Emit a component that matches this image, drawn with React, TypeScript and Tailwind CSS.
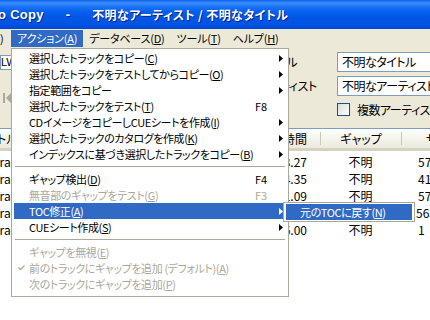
import React from 'react';

const jp = "font-['Noto_Sans_CJK_JP',sans-serif] [font-feature-settings:'palt']";
const ui = 'text-[11px] tracking-[-0.4px]';

type Entry =
  | { sep: true }
  | {
      sep?: false;
      t: string;
      k?: string;
      shortcut?: string;
      sub?: boolean;
      disabled?: boolean;
      active?: boolean;
      checked?: boolean;
    };

const entries: Entry[] = [
  { t: '選択したトラックをコピー', k: 'C', sub: true },
  { t: '選択したトラックをテストしてからコピー', k: 'O', sub: true },
  { t: '指定範囲をコピー', sub: true },
  { t: '選択したトラックをテスト', k: 'T', shortcut: 'F8' },
  { t: 'CDイメージをコピーしCUEシートを作成', k: 'I', sub: true },
  { t: '選択したトラックのカタログを作成', k: 'K', sub: true },
  { t: 'インデックスに基づき選択したトラックをコピー', k: 'B', sub: true },
  { sep: true },
  { t: 'ギャップ検出', k: 'D', shortcut: 'F4' },
  { t: '無音部のギャップをテスト', k: 'G', shortcut: 'F3', disabled: true },
  { t: 'TOC修正', k: 'A', sub: true, active: true },
  { t: 'CUEシート作成', k: 'S', sub: true },
  { sep: true },
  { t: 'ギャップを無視', k: 'E', disabled: true },
  { t: '前のトラックにギャップを追加 (デフォルト)', k: 'A', disabled: true, checked: true },
  { t: '次のトラックにギャップを追加', k: 'P', disabled: true },
];

const rows = [
  { time: '3:23.27', gap: '不明', size: '57.13' },
  { time: '4:04.35', gap: '不明', size: '41.08' },
  { time: '5:41.09', gap: '不明', size: '57.62' },
  { time: '4:50.12', gap: '不明', size: '563' },
  { time: '3:56.00', gap: '不明', size: '1' },
];

function Label({ t, k }: { t: string; k?: string }) {
  if (!k) return <>{t}</>;
  return (
    <>
      {t}(<span className="underline underline-offset-[1px]">{k}</span>)
    </>
  );
}

function Arrow({ white }: { white?: boolean }) {
  return (
    <svg width="4" height="7" viewBox="0 0 4 7" className="shrink-0">
      <path d="M0 0 L4 3.5 L0 7 Z" fill={white ? '#ffffff' : '#000000'} />
    </svg>
  );
}

function ActionMenu() {
  return (
    <div className={`absolute left-[11px] top-[48px] w-[278px] bg-white border border-[#aca899] pt-[1px] pb-[4px] px-[2px] ${ui} ${jp}`}>
      {entries.map((e, i) => {
        if (e.sep) {
          return (
            <div key={i} className="h-[9px] flex items-center px-[1px]">
              <div className="h-px w-full bg-[#aca899]" />
            </div>
          );
        }
        const color = e.active ? 'bg-[#316ac5] text-white' : e.disabled ? 'text-[#aca899]' : 'text-black';
        return (
          <div key={i} className={`h-[16px] flex items-center leading-none ${color}`}>
            <div className="w-[15px] shrink-0 flex justify-center">
              {e.checked && (
                <svg width="7" height="6" viewBox="0 0 7 6">
                  <path d="M0.5 2.5 L2.5 4.5 L6.5 0.5" stroke="#aca899" strokeWidth="1.3" fill="none" />
                </svg>
              )}
            </div>
            <span className="whitespace-nowrap">
              <Label t={e.t} k={e.k} />
            </span>
            <div className="flex-1" />
            {e.shortcut && <span className="w-[24px] shrink-0 whitespace-nowrap tracking-normal">{e.shortcut}</span>}
            <div className="w-[4px] mr-[3px] shrink-0 flex">{e.sub && <Arrow white={e.active} />}</div>
          </div>
        );
      })}
    </div>
  );
}

function TocSubMenu() {
  return (
    <div className={`absolute left-[283px] top-[202px] w-[132px] bg-white border border-[#aca899] p-px pl-[2px] pr-[2px] ${ui} ${jp}`}>
      <div className="h-[16px] flex items-center bg-[#316ac5] text-white pl-[14px] leading-none whitespace-nowrap">
        <Label t="元のTOCに戻す" k="N" />
      </div>
    </div>
  );
}

export default function App() {
  return (
    <div className={`relative w-[430px] h-[320px] overflow-hidden bg-[#ece9d8] text-black ${jp}`}>
      {/* title bar */}
      <div className="h-[29px] flex items-center whitespace-nowrap text-white font-bold bg-[linear-gradient(to_bottom,#0a5fee_0%,#3d8ffc_10%,#1c75f8_22%,#0660ee_40%,#0056e5_60%,#0054e3_85%,#0046d6_100%)] [text-shadow:1px_1px_0_#0a1e8a]">
        <span className="ml-[-2px] font-['Liberation_Sans',sans-serif] text-[13px] tracking-[0.3px]">o Copy</span>
        <span className="ml-[22px] font-['Liberation_Sans',sans-serif] text-[13px]">-</span>
        <span className="ml-[22px] text-[12px] tracking-[0.4px]">不明なアーティスト / 不明なタイトル</span>
      </div>

      {/* menu bar */}
      <div className="h-[19px] flex items-start leading-none whitespace-nowrap text-[11px] tracking-[-0.2px]">
        <div className="w-[11px] h-[17px] mt-px flex items-center">)</div>
        <div className="h-[17px] mt-px px-[6px] flex items-center bg-[#316ac5] text-white">
          <Label t="アクション" k="A" />
        </div>
        <div className="h-[17px] mt-px px-[6px] flex items-center">
          <Label t="データベース" k="D" />
        </div>
        <div className="h-[17px] mt-px px-[6px] flex items-center">
          <Label t="ツール" k="T" />
        </div>
        <div className="h-[17px] mt-px px-[6px] flex items-center">
          <Label t="ヘルプ" k="H" />
        </div>
      </div>

      {/* toolbar + album fields */}
      <div className={`h-[80px] flex leading-none ${ui}`}>
        <div className="w-[11px] shrink-0 flex flex-col">
          <div className="mt-[7px] h-[15px] w-[30px] bg-white border border-[#7f9db9] flex items-center overflow-hidden">
            <span className="font-['Liberation_Sans',sans-serif] text-[11px] tracking-normal">LW</span>
          </div>
          <svg width="9" height="12" viewBox="0 0 9 12" className="mt-[22px] ml-[3px]">
            <rect x="0" y="1" width="2" height="10" fill="#aca899" />
            <path d="M8 1 L3 6 L8 11 Z" fill="#aca899" />
          </svg>
        </div>
        <div className="ml-[246px] shrink-0 flex flex-col pt-[4px] gap-[4px] whitespace-nowrap">
          <div className="h-[20px] flex items-center">
            <span className="w-[80px] shrink-0 text-[12px] tracking-[-0.3px]">タイトル</span>
            <div className="h-[20px] w-[120px] shrink-0 bg-white border border-[#7f9db9] flex items-center pl-[4px] text-[12px] tracking-[-0.5px]">不明なタイトル</div>
          </div>
          <div className="h-[20px] flex items-center">
            <span className="w-[80px] shrink-0 text-[12px] tracking-[-0.3px]">アーティスト</span>
            <div className="h-[20px] w-[120px] shrink-0 bg-white border border-[#7f9db9] flex items-center pl-[4px] text-[12px] tracking-[-0.5px]">不明なアーティスト</div>
          </div>
          <div className="mt-[3px] h-[13px] flex items-center ml-[80px]">
            <div className="w-[13px] h-[13px] shrink-0 border border-[#1c5180] bg-[linear-gradient(135deg,#dcdcd7,#ffffff)]" />
            <span className="ml-[7px] text-[12px] tracking-[-0.5px]">複数アーティスト</span>
          </div>
        </div>
      </div>

      {/* track list */}
      <div className="bg-white border-t border-[#7f9db9] h-[200px] leading-none whitespace-nowrap text-[12px]">
        <div className="h-[22px] flex bg-[linear-gradient(to_bottom,#ffffff,#f3f2ea_60%,#ebeadb)] border-b-[3px] border-[#d6d2c2]">
          <div className="w-[240px] shrink-0 flex items-center">
            <span className="ml-[-3px]">トル</span>
          </div>
          <div className="w-[80px] shrink-0 flex items-center justify-end pr-[13px]">時間</div>
          <div className="w-[81px] shrink-0 flex items-center justify-center border-l border-[#cbc7b8] my-[3px]">ギャップ</div>
          <div className="w-[60px] shrink-0 flex items-center pl-[24px] border-l border-[#cbc7b8] my-[3px]">サイズ</div>
        </div>
        <div className="pt-[2px]">
          {rows.map((r, i) => (
            <div key={i} className="h-[17px] flex items-center">
              <div className="w-[240px] shrink-0">
                <span className="ml-[-7px]">Track {i + 1}</span>
              </div>
              <div className="w-[80px] shrink-0 text-right pr-[13px]">{r.time}</div>
              <div className="w-[81px] shrink-0 text-center">{r.gap}</div>
              <div className={`w-[60px] shrink-0 ${i === 3 ? 'pl-[15px]' : 'pl-[17px]'}`}>{r.size}</div>
            </div>
          ))}
        </div>
      </div>

      <ActionMenu />
      <TocSubMenu />
    </div>
  );
}
